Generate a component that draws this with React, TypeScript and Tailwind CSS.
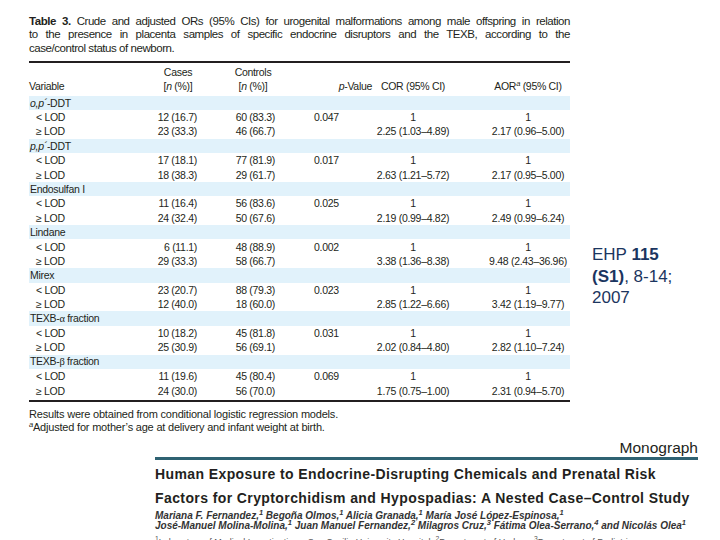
import React from "react"

const GROUPS = [
  { name: <><i>o,p´</i>-DDT</>, lt: ["12 (16.7)", "60 (83.3)"], ge: ["23 (33.3)", "46 (66.7)"], p: "0.047", cor: "2.25 (1.03–4.89)", aor: "2.17 (0.96–5.00)" },
  { name: <><i>p,p´</i>-DDT</>, lt: ["17 (18.1)", "77 (81.9)"], ge: ["18 (38.3)", "29 (61.7)"], p: "0.017", cor: "2.63 (1.21–5.72)", aor: "2.17 (0.95–5.00)" },
  { name: "Endosulfan I", lt: ["11 (16.4)", "56 (83.6)"], ge: ["24 (32.4)", "50 (67.6)"], p: "0.025", cor: "2.19 (0.99–4.82)", aor: "2.49 (0.99–6.24)" },
  { name: "Lindane", lt: ["6 (11.1)", "48 (88.9)"], ge: ["29 (33.3)", "58 (66.7)"], p: "0.002", cor: "3.38 (1.36–8.38)", aor: "9.48 (2.43–36.96)" },
  { name: "Mirex", lt: ["23 (20.7)", "88 (79.3)"], ge: ["12 (40.0)", "18 (60.0)"], p: "0.023", cor: "2.85 (1.22–6.66)", aor: "3.42 (1.19–9.77)" },
  { name: <>TEXB-<span className="font-['Liberation_Serif',serif]">α</span> fraction</>, lt: ["10 (18.2)", "45 (81.8)"], ge: ["25 (30.9)", "56 (69.1)"], p: "0.031", cor: "2.02 (0.84–4.80)", aor: "2.82 (1.10–7.24)" },
  { name: <>TEXB-<span className="font-['Liberation_Serif',serif]">β</span> fraction</>, lt: ["11 (19.6)", "45 (80.4)"], ge: ["24 (30.0)", "56 (70.0)"], p: "0.069", cor: "1.75 (0.75–1.00)", aor: "2.31 (0.94–5.70)" }
]

const COLS = "grid grid-cols-[111px_76px_80px_76px_82px_116px] whitespace-nowrap"

function Row({ label, cells }: { label: string; cells: string[] }) {
  return (
    <div className={`${COLS} h-[14.4px] items-center`}>
      <div className="pl-[7px]">{label}</div>
      <div className="text-right pr-[19px]">{cells[0]}</div>
      <div className="text-right pr-[21px]">{cells[1]}</div>
      <div className="pl-[18px]">{cells[2]}</div>
      <div className="text-center">{cells[3]}</div>
      <div className="text-center pl-[32px]">{cells[4]}</div>
    </div>
  )
}

export default function App() {
  return (
    <div className="w-[720px] h-[540px] overflow-hidden bg-white text-[#231f20]">
      <div className="flex">
        {/* table block */}
        <div className="ml-[29px] w-[541px] shrink-0 pt-[14.5px] font-['Liberation_Sans',Arial,sans-serif]">
          <div className="text-[11.5px] leading-[13.5px] tracking-[-0.45px]">
            <div className="text-justify [text-align-last:justify]">
              <b>Table 3.</b> Crude and adjusted ORs (95% CIs) for urogenital malformations among male offspring in relation
            </div>
            <div className="text-justify [text-align-last:justify]">
              to the presence in placenta samples of specific endocrine disruptors and the TEXB, according to the
            </div>
            <div>case/control status of newborn.</div>
          </div>

          <div className="mt-[6px] h-[2px] bg-[#231f20]" />

          <div className="text-[10.5px] leading-[14px] tracking-[-0.3px]">
            <div className={`${COLS} h-[32.5px] items-end pb-[2.5px]`}>
              <div>Variable</div>
              <div className="text-center">Cases<br />[<i>n</i> (%)]</div>
              <div className="text-center pr-[6px]">Controls<br />[<i>n</i> (%)]</div>
              <div className="text-right"><i>p</i>-Value</div>
              <div className="text-center">COR (95% CI)</div>
              <div className="text-center pl-[32px]">AOR<sup className="text-[7.5px] italic">a</sup> (95% CI)</div>
            </div>

            {GROUPS.map((g, i) => (
              <div key={i}>
                <div className="h-[14.4px] flex items-center bg-[#e1f2fb] pl-[1px] whitespace-nowrap">
                  <span>{g.name}</span>
                </div>
                <Row label="< LOD" cells={[g.lt[0], g.lt[1], g.p, "1", "1"]} />
                <Row label="≥ LOD" cells={[g.ge[0], g.ge[1], "", g.cor, g.aor]} />
              </div>
            ))}

            <div className="mt-[2px] h-[2px] bg-[#231f20]" />

            <div className="mt-[6px] text-[11px] leading-[13px] tracking-[-0.2px]">
              <div>Results were obtained from conditional logistic regression models.</div>
              <div><sup className="text-[7.5px] italic">a</sup>Adjusted for mother’s age at delivery and infant weight at birth.</div>
            </div>
          </div>
        </div>

        {/* citation */}
        <div className="ml-[22px] mt-[244px] text-[17px] leading-[21.5px] text-[#1b3560] font-['Liberation_Sans',Arial,sans-serif] whitespace-nowrap">
          <div>EHP <b>115</b></div>
          <div><b>(S1)</b>, 8-14;</div>
          <div>2007</div>
        </div>
      </div>

      {/* article header */}
      <div className="ml-[155px] mr-[22px] mt-[5px] font-['Liberation_Sans',Arial,sans-serif]">
        <div className="text-right text-[15.5px] leading-[18px] text-[#231f20]">Monograph</div>
        <div className="h-[3px] bg-[#2f6272]" />
        <div className="mt-[2px] text-[14px] leading-[24px] font-bold tracking-[0.4px] text-[#231f20] whitespace-nowrap">
          <div>Human Exposure to Endocrine-Disrupting Chemicals and Prenatal Risk</div>
          <div>Factors for Cryptorchidism and Hypospadias: A Nested Case–Control Study</div>
        </div>
        <div className="mt-[1px] text-[10px] leading-[10.5px] italic font-bold text-[#333] whitespace-nowrap">
          <div>Mariana F. Fernandez,<sup>1</sup> Begoña Olmos,<sup>1</sup> Alicia Granada,<sup>1</sup> María José López-Espinosa,<sup>1</sup></div>
          <div>José-Manuel Molina-Molina,<sup>1</sup> Juan Manuel Fernandez,<sup>2</sup> Milagros Cruz,<sup>3</sup> Fátima Olea-Serrano,<sup>4</sup> and Nicolás Olea<sup>1</sup></div>
        </div>
        <div className="mt-[5px] text-[9px] leading-[10px] text-[#555] whitespace-nowrap">
          <sup>1</sup>Laboratory of Medical Investigations, San Cecilio University Hospital, <sup>2</sup>Department of Urology, <sup>3</sup>Department of Pediatrics
        </div>
      </div>
    </div>
  )
}
